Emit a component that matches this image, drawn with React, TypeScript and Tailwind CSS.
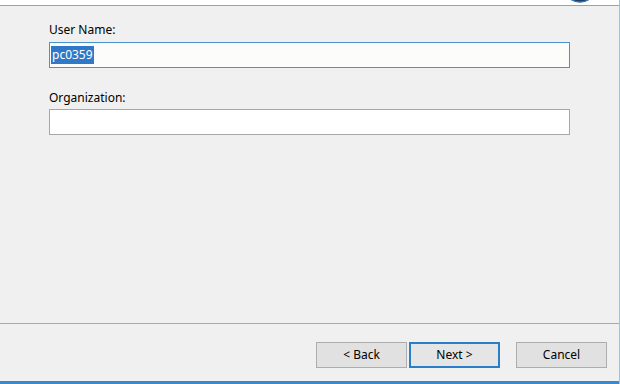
const font = { fontFamily: '"Noto Sans", "Open Sans", sans-serif' };

function WizardButton({ label, primary }: { label: string; primary?: boolean }) {
  return (
    <button
      className={
        primary
          ? "flex h-[26px] w-[91px] items-center justify-center border-2 border-[#2a7dc6] bg-[#e5e5e5] text-[12px] text-black"
          : "flex h-[26px] w-[91px] items-center justify-center border border-[#adadad] bg-[#e1e1e1] text-[12px] text-black"
      }
    >
      {label}
    </button>
  );
}

export default function App() {
  return (
    <div
      style={font}
      className="flex h-[384px] w-[620px] flex-col border-r border-[#9cc3e5] bg-[#f0f0f0]"
    >
      {/* bottom edge of the banner */}
      <div className="flex h-[6px] items-start justify-end overflow-hidden border-b border-[#a0a0a0] bg-white pr-[28px]">
        <svg width="22" height="4" viewBox="0 0 22 4" className="-mt-[1px]">
          <path d="M0 0 Q11 7 22 0 Z" fill="#1d3e66" />
          <path d="M3 1 Q11 5 19 1" stroke="#2e86d0" strokeWidth="1" fill="none" />
        </svg>
      </div>

      <div className="flex flex-1 flex-col px-[49px] pt-[16px]">
        <label className="text-[12px] leading-[16px] text-black">User Name:</label>
        <div className="mt-[4px] flex h-[26px] w-[521px] items-center border border-[#4a93cc] bg-[#fcfdfb] pl-[1px]">
          <span className="bg-[#2f79c8] px-[1px] text-[12px] leading-[18px] text-white">pc0359</span>
        </div>

        <label className="mt-[22px] text-[12px] leading-[16px] text-black">Organization:</label>
        <div className="mt-[3px] h-[26px] w-[521px] border border-[#a8a8a8] bg-white" />
      </div>

      <div className="border-t border-[#a9a9a9]">
        <div className="flex justify-end pb-[13px] pr-[12px] pt-[18px]">
          <WizardButton label="< Back" />
          <div className="ml-[2px]">
            <WizardButton label="Next >" primary />
          </div>
          <div className="ml-[16px]">
            <WizardButton label="Cancel" />
          </div>
        </div>
        <div className="h-[3px] bg-[#3a88cf]" />
      </div>
    </div>
  );
}
